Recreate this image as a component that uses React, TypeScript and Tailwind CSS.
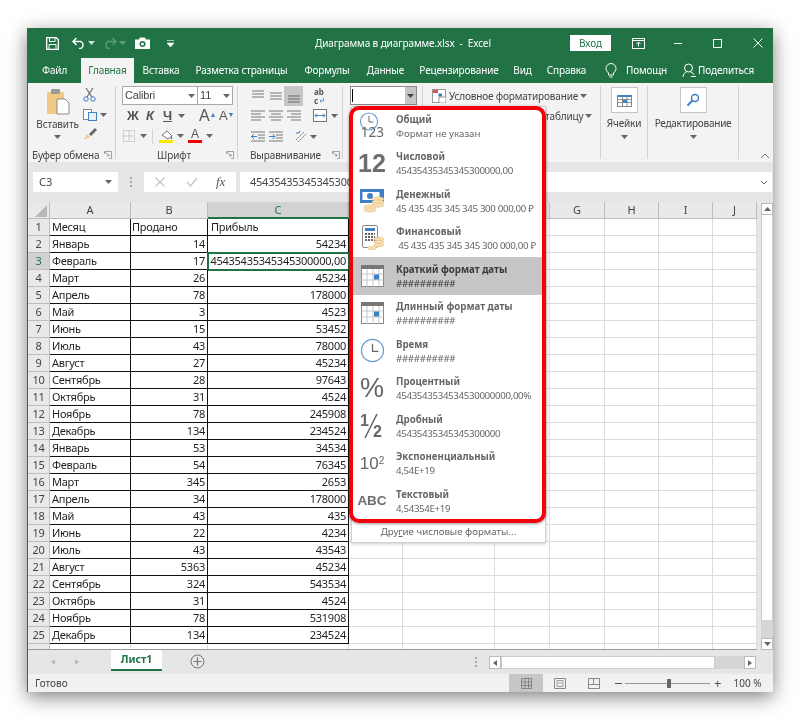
import { ReactNode } from "react";

const rows: [string, string, string][] = [
  ["Месяц", "Продано", "Прибыль"],
  ["Январь", "14", "54234"],
  ["Февраль", "17", "45435435345345300000,00"],
  ["Март", "26", "45234"],
  ["Апрель", "78", "178000"],
  ["Май", "3", "4523"],
  ["Июнь", "15", "53452"],
  ["Июль", "43", "78000"],
  ["Август", "27", "45234"],
  ["Сентябрь", "28", "97643"],
  ["Октябрь", "31", "4524"],
  ["Ноябрь", "78", "245908"],
  ["Декабрь", "134", "234524"],
  ["Январь", "53", "34534"],
  ["Февраль", "54", "76345"],
  ["Март", "345", "2653"],
  ["Апрель", "34", "178000"],
  ["Май", "43", "435"],
  ["Июнь", "22", "4234"],
  ["Июль", "43", "43543"],
  ["Август", "5363", "45234"],
  ["Сентябрь", "324", "543534"],
  ["Октябрь", "31", "4524"],
  ["Ноябрь", "78", "531908"],
  ["Декабрь", "134", "234524"],
];

const tabs = [
  { label: "Файл", w: "w-[53px]" },
  { label: "Главная", w: "w-[53px]", active: true },
  { label: "Вставка", w: "w-[54px]" },
  { label: "Разметка страницы", w: "w-[107px]" },
  { label: "Формулы", w: "w-[64px]" },
  { label: "Данные", w: "w-[53px]" },
  { label: "Рецензирование", w: "w-[94px]" },
  { label: "Вид", w: "w-[33px]" },
  { label: "Справка", w: "w-[55px]" },
];

const gridCols = ["w-[54px]", "w-[92px]", "w-[55px]", "w-[55px]", "w-[54px]", "w-[54px]", "w-[44px]"];
const headCols = [
  { l: "", w: "w-[54px]" },
  { l: "", w: "w-[92px]" },
  { l: "", w: "w-[55px]" },
  { l: "G", w: "w-[55px]" },
  { l: "H", w: "w-[54px]" },
  { l: "I", w: "w-[54px]" },
  { l: "J", w: "w-[44px]" },
];

const Caret = ({ c = "#666" }: { c?: string }) => (
  <svg width="7" height="4" viewBox="0 0 7 4" className="shrink-0"><path d="M0 0h7L3.5 4z" fill={c} /></svg>
);

const Launcher = () => (
  <svg width="8" height="8" viewBox="0 0 8 8" className="shrink-0"><path d="M.5 3V.5H7.5V7.5H5M1 1l4 4M5 3v2H3" fill="none" stroke="#8a8a8a" strokeWidth=".8" /></svg>
);

const Lines = ({ kind }: { kind: "l" | "c" | "r" }) => {
  const x = kind === "l" ? [0, 0, 0, 0] : kind === "c" ? [0, 2, 0, 2] : [0, 4, 0, 4];
  return (
    <svg width="14" height="11" viewBox="0 0 14 11">
      {[1, 4, 7, 10].map((y, i) => (
        <path key={y} d={`M${x[i]} ${y}H${i % 2 ? (kind === "l" ? 10 : kind === "c" ? 12 : 14) : 14}`} stroke="#777" strokeWidth="1" />
      ))}
    </svg>
  );
};

const ClockFace = ({ size = 26 }: { size?: number }) => (
  <svg width={size} height={size} viewBox="0 0 26 26"><circle cx="13" cy="13" r="11.5" fill="#fff" stroke="#6d9bcf" strokeWidth="1.2" /><path d="M13 6v8h6" fill="none" stroke="#666" strokeWidth="1.3" /></svg>
);

const Calendar = () => (
  <svg width="23" height="22" viewBox="0 0 23 22">
    <rect x=".5" y=".5" width="22" height="21" fill="#fff" stroke="#8a8a8a" />
    <rect x="0" y="0" width="23" height="4" fill="#777" />
    <path d="M.5 9h22M.5 15h22M6 4v18M12 4v18M18 4v18" stroke="#bbb" strokeWidth=".8" />
    <rect x="13" y="9.5" width="5" height="5" fill="#3f7fc4" />
  </svg>
);

const Coins = () => (
  <>
    {[0, 3, 6].map((d) => <ellipse key={d} cx="18" cy={10 + d} rx="6" ry="2.2" fill="#f7ddb0" stroke="#dfb877" strokeWidth=".5" />)}
    {[0, 3].map((d) => <ellipse key={d} cx="10" cy={18 + d} rx="6" ry="2.2" fill="#f7ddb0" stroke="#dfb877" strokeWidth=".5" />)}
  </>
);

const formats: { title: string; sub: string; icon: ReactNode; active?: boolean; plain?: boolean }[] = [
  {
    title: "Общий", sub: "Формат не указан", plain: true,
    icon: (
      <svg width="26" height="28" viewBox="0 0 26 28">
        <circle cx="10" cy="9.5" r="8.5" fill="#fff" stroke="#6d9bcf" strokeWidth="1.1" />
        <path d="M10 4v6h4.5" fill="none" stroke="#666" strokeWidth="1" />
        <text x="25" y="25" textAnchor="end" fontSize="13.5" fill="#666" fontFamily="Noto Sans, sans-serif">123</text>
      </svg>
    ),
  },
  { title: "Числовой", sub: "45435435345345300000,00", icon: <span className="text-[25px] font-bold leading-none text-[#6e6e6e] font-['Liberation_Sans',sans-serif]">12</span> },
  {
    title: "Денежный", sub: "45 435 435 345 345 300 000,00 ₽",
    icon: (
      <svg width="25" height="24" viewBox="0 0 25 24">
        <rect x="0" y="0" width="24" height="14" fill="#3f7fc4" />
        <rect x="2.5" y="3" width="17" height="8" fill="#fff" />
        <circle cx="10" cy="7" r="3" fill="#3f7fc4" />
        <Coins />
      </svg>
    ),
  },
  {
    title: "Финансовый", sub: " 45 435 435 345 345 300 000,00 ₽",
    icon: (
      <svg width="26" height="26" viewBox="0 0 26 26">
        <rect x="3.5" y=".5" width="15" height="22" rx="1.5" fill="#fff" stroke="#8a8a8a" />
        <rect x="6" y="3" width="10" height="3" fill="#3f7fc4" />
        <path d="M6 9h10M6 12h10M6 15h10" stroke="#666" strokeWidth="2" strokeDasharray="2 1" />
        {[0, 3, 6].map((d) => <ellipse key={d} cx="20" cy={14 + d} rx="5" ry="1.8" fill="#f7ddb0" stroke="#dfb877" strokeWidth=".5" />)}
        <ellipse cx="13" cy="23" rx="4.5" ry="1.8" fill="#f7ddb0" stroke="#dfb877" strokeWidth=".5" />
      </svg>
    ),
  },
  { title: "Краткий формат даты", sub: "##########", active: true, icon: <Calendar /> },
  { title: "Длинный формат даты", sub: "##########", icon: <Calendar /> },
  { title: "Время", sub: "##########", icon: <ClockFace size={25} /> },
  { title: "Процентный", sub: "4543543534534530000000,00%", icon: <span className="text-[27px] leading-none text-[#666] font-['Liberation_Sans',sans-serif]">%</span> },
  {
    title: "Дробный", sub: "45435435345345300000",
    icon: (
      <svg width="26" height="28" viewBox="0 0 26 28">
        <text x="1" y="14" fontSize="16" fontWeight="bold" fill="#666" fontFamily="Liberation Sans, sans-serif">1</text>
        <path d="M6 26 18 2" stroke="#666" strokeWidth="1.5" />
        <text x="14" y="25" fontSize="16" fontWeight="bold" fill="#666" fontFamily="Liberation Sans, sans-serif">2</text>
      </svg>
    ),
  },
  {
    title: "Экспоненциальный", sub: "4,54E+19",
    icon: <span className="text-[17px] leading-none text-[#666] font-['Liberation_Sans',sans-serif]">10<sup className="text-[10px]">2</sup></span>,
  },
  { title: "Текстовый", sub: "4,54354E+19", icon: <span className="text-[13.5px] font-bold leading-none text-[#6e6e6e] font-['Liberation_Sans',sans-serif]">ABC</span> },
];

function SheetRow({ n, a, b, c }: { n: number; a: string; b: string; c: string }) {
  const sel = n === 3;
  return (
    <div className="flex h-[17px] text-[11px] tracking-[-0.25px] leading-[16px] text-[#1f1f1f] font-['Noto_Sans',sans-serif]">
      <div className={`w-[22px] shrink-0 text-center border-r border-b border-[#bdbdbd] text-[#444] ${sel ? "bg-[#d2d2d2] text-[#217346]" : "bg-[#e9e9e9]"}`}>{n}</div>
      <div className="w-[81px] shrink-0 pl-[2px] border-r border-b border-[#111] whitespace-nowrap overflow-hidden">{a}</div>
      <div className={`w-[77px] shrink-0 pr-[2px] border-r border-b border-[#111] whitespace-nowrap overflow-hidden ${n === 1 ? "text-left pl-[1px]" : "text-right"}`}>{b}</div>
      <div className={`w-[141px] shrink-0 px-[2px] border-r border-b border-[#111] whitespace-nowrap ${n === 1 ? "text-left pl-[3px]" : "text-right"} ${sel ? "outline-2 -outline-offset-1 outline-[#217346]" : ""}`}>{c}</div>
      {gridCols.map((w, i) => <div key={i} className={`${w} shrink-0 border-r border-b border-[#dcdcdc]`} />)}
    </div>
  );
}

function Ribbon() {
  return (
    <div className="flex h-[79px] shrink-0 bg-[#f3f3f3] text-[10px] tracking-[-0.15px] text-[#444]">
      {/* clipboard */}
      <div className="w-[88px] shrink-0 my-[3px] border-r border-[#d2d2d2] flex flex-col">
        <div className="flex h-[56px]">
          <div className="w-[50px] flex flex-col items-center pl-[9px] pt-[3px]">
            <svg width="24" height="26" viewBox="0 0 24 26"><rect x="1" y="3" width="17" height="22" rx="1" fill="#f0c987" /><rect x="5" y="0" width="9" height="5" rx="1" fill="#9a9a9a" /><path d="M11 10h8l4 4v11H11z" fill="#fff" stroke="#8a8a8a" /></svg>
            <span className="mt-[3px] leading-[13px] whitespace-nowrap">Вставить</span>
            <div className="mt-[4px]"><Caret /></div>
          </div>
          <div className="flex flex-col pl-[5px] gap-[7px] pt-[2px]">
            <svg width="13" height="14" viewBox="0 0 13 14"><circle cx="3" cy="11" r="2.2" fill="none" stroke="#3f7fc4" /><circle cx="10" cy="11" r="2.2" fill="none" stroke="#3f7fc4" /><path d="M4 9 10 0M9 9 3 0" stroke="#666" strokeWidth="1.1" /></svg>
            <div className="flex items-center gap-[3px]">
              <svg width="14" height="12" viewBox="0 0 14 12"><rect x=".5" y=".5" width="8" height="10" fill="#fff" stroke="#888" /><rect x="5.5" y="3.5" width="8" height="8" fill="#e8f0f8" stroke="#3f7fc4" /></svg>
              <Caret />
            </div>
            <svg width="14" height="13" viewBox="0 0 14 13"><path d="m1 12 3-6 3 3z" fill="#f0c987" /><path d="m6 6 6-6 2 2-6 6z" fill="#666" /></svg>
          </div>
        </div>
        <div className="flex items-center justify-between pl-[4px] pr-[3px] mt-auto mb-[-2px] leading-[12px]">
          <span className="whitespace-nowrap">Буфер обмена</span>
          <Launcher />
        </div>
      </div>

      {/* font */}
      <div className="w-[122px] shrink-0 my-[3px] border-r border-[#d2d2d2] flex flex-col pl-[6px]">
        <div className="flex h-[19px] w-[111px] bg-white border border-[#a8a8a8]">
          <div className="w-[75px] flex items-center justify-between px-[2px] border-r border-[#a8a8a8] text-[11px] font-['Liberation_Sans',sans-serif]"><span>Calibri</span><Caret /></div>
          <div className="flex-1 flex items-center justify-between px-[2px] text-[11px] font-['Liberation_Sans',sans-serif]"><span>11</span><Caret /></div>
        </div>
        <div className="flex items-center h-[19px] pl-[5px] mt-[1px] text-[13px] text-[#555] font-['Liberation_Sans',sans-serif]">
          <b className="w-[19px]">Ж</b>
          <i className="w-[17px] font-bold">К</i>
          <b className="w-[15px] underline">Ч</b>
          <Caret />
          <span className="ml-[14px] w-[20px] text-[16px] leading-none">A<sup className="text-[#3f7fc4] text-[7px]">▲</sup></span>
          <span className="text-[13px] leading-none">A<sup className="text-[#3f7fc4] text-[7px]">▼</sup></span>
        </div>
        <div className="flex items-center h-[18px] pl-[1px] mt-[2px]">
          <svg width="12" height="12" viewBox="0 0 12 12"><rect x=".5" y=".5" width="11" height="11" fill="none" stroke="#aaa" strokeDasharray="1 1" /><path d="M6 1v10M1 6h10" stroke="#aaa" strokeDasharray="1 1" /></svg>
          <div className="ml-[5px]"><Caret /></div>
          <div className="w-px h-[15px] bg-[#d2d2d2] ml-[5px]" />
          <div className="ml-[6px] flex flex-col items-center w-[14px]">
            <svg width="13" height="10" viewBox="0 0 13 10"><path d="m2 5 5-4 5 5-4 3z" fill="#fff" stroke="#777" /><path d="M11 6s2 2 1 3-2-1-1-3" fill="#3f7fc4" /></svg>
            <div className="w-[14px] h-[3px] bg-[#ffe600]" />
          </div>
          <div className="ml-[4px]"><Caret /></div>
          <div className="ml-[4px] flex flex-col items-center w-[14px] leading-none">
            <span className="text-[12px] text-[#555] h-[11px] leading-[11px] font-['Liberation_Sans',sans-serif]">A</span>
            <div className="w-[14px] h-[3px] bg-[#f00000]" />
          </div>
          <div className="ml-[4px]"><Caret /></div>
        </div>
        <div className="flex items-center mt-auto mb-[-2px] leading-[12px] pr-[3px]">
          <span className="flex-1 text-center">Шрифт</span>
          <Launcher />
        </div>
      </div>

      {/* alignment */}
      <div className="w-[105px] shrink-0 my-[3px] border-r border-[#d2d2d2] flex flex-col pl-[13px]">
        <div className="flex items-center h-[20px]">
          <svg width="14" height="12" viewBox="0 0 14 12"><path d="M1 1h12M1 4h12M1 7h12" stroke="#777" /></svg>
          <svg width="14" height="12" viewBox="0 0 14 12" className="ml-[4px]"><path d="M1 3h12M1 6h12M1 9h12" stroke="#777" /></svg>
          <div className="ml-[1px] w-[19px] h-[20px] bg-[#c6c6c6] flex items-end justify-center pb-[3px]"><svg width="14" height="9" viewBox="0 0 14 9"><path d="M1 2h12M1 5h12M1 8h12" stroke="#666" /></svg></div>
          <div className="ml-[11px] text-[8px] leading-[9px] text-[#555] font-bold">
            <div>ab</div>
            <div className="flex items-center gap-[1px]">c<svg width="5" height="5" viewBox="0 0 5 5"><path d="M4.500 0v3H1M2.500 1.500 1 3l1.500 1.500" fill="none" stroke="#3f7fc4" strokeWidth=".8" /></svg></div>
          </div>
        </div>
        <div className="flex items-center h-[19px]">
          <Lines kind="l" />
          <div className="ml-[4px]"><Lines kind="c" /></div>
          <div className="ml-[4px]"><Lines kind="r" /></div>
          <svg width="14" height="13" viewBox="0 0 14 13" className="ml-[12px]"><rect x=".5" y=".5" width="13" height="12" fill="#fff" stroke="#777" /><path d="M2 6.5h10M2 6.5l2-2M2 6.5l2 2M12 6.5l-2-2M12 6.5l-2 2" stroke="#3f7fc4" fill="none" /></svg>
          <div className="ml-[4px]"><Caret /></div>
        </div>
        <div className="flex items-center h-[19px] mt-[2px]">
          <svg width="14" height="11" viewBox="0 0 14 11"><path d="M0 1h14M7 4h7M7 7h7M0 10h14" stroke="#777" /><path d="M6 5.5H0M3 3 .5 5.5 3 8" stroke="#3f7fc4" fill="none" /></svg>
          <svg width="14" height="11" viewBox="0 0 14 11" className="ml-[4px]"><path d="M0 1h14M7 4h7M7 7h7M0 10h14" stroke="#777" /><path d="M0 5.5h6M3.500 3 6 5.500 3.500 8" stroke="#3f7fc4" fill="none" /></svg>
          <svg width="13" height="13" viewBox="0 0 13 13" className="ml-[12px]"><path d="m1 10 8-8M3 12l8-8" stroke="#777" strokeDasharray="2 1" /><path d="M1 3h3l1-2" stroke="#3f7fc4" fill="none" /></svg>
          <div className="ml-[2px]"><Caret /></div>
        </div>
        <div className="flex items-center justify-between pr-[2px] mt-auto mb-[-2px] leading-[12px] ml-[-1px]">
          <span>Выравнивание</span>
          <Launcher />
        </div>
      </div>

      {/* number */}
      <div className="w-[80px] shrink-0 my-[3px] border-r border-[#d2d2d2] pl-[7px]">
        <div className="flex w-[67px] h-[19px] bg-white border border-[#8a8a8a]">
          <div className="flex-1 pl-[1px] py-[2px]"><div className="w-px h-full bg-black" /></div>
          <div className="w-[11px] bg-[#c6c6c6] flex items-center justify-center"><Caret c="#444" /></div>
        </div>
      </div>

      {/* styles */}
      <div className="w-[178px] shrink-0 my-[3px] border-r border-[#d2d2d2] pl-[9px] flex flex-col">
        <div className="flex items-center h-[20px]">
          <svg width="14" height="14" viewBox="0 0 14 14"><rect x=".5" y=".5" width="13" height="13" fill="#fff" stroke="#999" /><rect x="1" y="1" width="5" height="3" fill="#d9534f" /><rect x="6.500" y="4.500" width="3.500" height="3" fill="#3f7fc4" /><rect x="7" y="8" width="7" height="6" fill="#fff" stroke="#777" strokeWidth=".7" /></svg>
          <span className="ml-[3px] whitespace-nowrap">Условное форматирование</span>
          <div className="ml-[2px]"><Caret /></div>
        </div>
        <div className="flex items-center h-[20px] pl-[113px]">
          <span>таблицу</span>
          <div className="ml-[2px]"><Caret /></div>
        </div>
      </div>

      {/* cells */}
      <div className="w-[47px] shrink-0 my-[3px] border-r border-[#d2d2d2] flex flex-col items-center">
        <div className="mt-[1px] w-[27px] h-[26px] bg-white border border-[#c6c6c6] flex items-center justify-center">
          <svg width="15" height="14" viewBox="0 0 15 14"><rect x=".5" y="2.500" width="14" height="11" fill="#fff" stroke="#888" /><path d="M1 3h13" stroke="#3f7fc4" strokeWidth="2" /><path d="M1 6.500h13M1 9.500h13M5.500 3v10M10 3v10" stroke="#777" strokeWidth=".8" /><rect x="6" y="7" width="4" height="3" fill="#3f7fc4" /></svg>
        </div>
        <span className="mt-[4px] leading-[13px]">Ячейки</span>
        <div className="mt-[5px]"><Caret /></div>
      </div>

      {/* editing */}
      <div className="w-[91px] shrink-0 my-[3px] border-r border-[#d2d2d2] flex flex-col items-center">
        <div className="mt-[1px] w-[27px] h-[26px] bg-white border border-[#c6c6c6] flex items-center justify-center">
          <svg width="14" height="14" viewBox="0 0 14 14"><circle cx="9" cy="5" r="3.500" fill="#fff" stroke="#3f7fc4" strokeWidth="1.500" /><path d="m6.500 7.500-5 5" stroke="#3f7fc4" strokeWidth="2" /></svg>
        </div>
        <span className="mt-[4px] leading-[13px] whitespace-nowrap tracking-[-0.25px]">Редактирование</span>
        <div className="mt-[5px]"><Caret /></div>
      </div>

      <div className="flex-1 flex items-end justify-end pr-[3px] pb-[3px]">
        <svg width="10" height="6" viewBox="0 0 10 6"><path d="M1 5l4-4 4 4" fill="none" stroke="#777" /></svg>
      </div>
    </div>
  );
}

export default function App() {
  return (
    <div className="w-[800px] h-[719px] bg-white pt-[28px] pl-[27px] overflow-hidden font-['Noto_Sans','Open_Sans',sans-serif]">
      <div className="relative w-[746px] h-[664px] flex flex-col bg-white border-l border-[#217346] shadow-[0_5px_18px_rgba(0,0,0,0.5)] blur-[0.4px]">
        {/* title bar */}
        <div className="h-[30px] shrink-0 bg-[#217346] flex items-center text-white text-[10px]">
          <svg width="13" height="13" viewBox="0 0 13 13" className="ml-[18px]"><path d="M.7.7h9.500l2.100 2.100v9.500H.7z" fill="none" stroke="#fff" strokeWidth="1.300" /><path d="M3.500 1v3.500h5.500V1M3 12V7.500h7V12" fill="none" stroke="#fff" /></svg>
          <svg width="14" height="12" viewBox="0 0 14 12" className="ml-[13px]"><path d="M4.500 1 1 4.500 4.500 8M1 4.500h8a4 4 0 0 1 0 7H7" fill="none" stroke="#fff" strokeWidth="1.400" /></svg>
          <div className="ml-[2px]"><Caret c="#cfe3d8" /></div>
          <svg width="14" height="12" viewBox="0 0 14 12" className="ml-[8px]"><path d="M9.500 1 13 4.500 9.500 8M13 4.500H5a4 4 0 0 0 0 7h2" fill="none" stroke="#5f9c7b" strokeWidth="1.400" /></svg>
          <div className="ml-[2px]"><Caret c="#5f9c7b" /></div>
          <svg width="15" height="12" viewBox="0 0 15 12" className="ml-[9px]"><path d="M0 2.500h4L5 .5h5l1 2h4V12H0z" fill="#fff" /><circle cx="7.500" cy="7" r="3" fill="#217346" /><circle cx="7.500" cy="7" r="1.500" fill="#fff" /></svg>
          <svg width="7" height="7" viewBox="0 0 7 7" className="ml-[17px]"><path d="M0 .5h7M0 3h7l-3.500 4z" stroke="#fff" strokeWidth=".6" fill="#fff" /></svg>
          <span className="ml-[141px] w-[180px] whitespace-pre tracking-[-0.1px]">Диаграмма в диаграмме.xlsx  -  Excel</span>
          <div className="ml-[75px] w-[41px] h-[16px] bg-white text-[#217346] flex items-center justify-center">Вход</div>
          <svg width="13" height="11" viewBox="0 0 13 11" className="ml-[21px]"><rect x=".5" y=".5" width="12" height="10" fill="none" stroke="#fff" /><path d="M1 2.500h11M6.500 8.500v-4M4.500 6l2-2 2 2" fill="none" stroke="#fff" /></svg>
          <div className="ml-[29px] w-[8px] h-px bg-white" />
          <div className="ml-[31px] w-[9px] h-[9px] border border-white" />
          <svg width="10" height="10" viewBox="0 0 10 10" className="ml-[31px]"><path d="m.5.5 9 9m0-9-9 9" stroke="#fff" /></svg>
        </div>

        {/* tabs */}
        <div className="h-[25px] shrink-0 bg-[#217346] flex text-white text-[10px] tracking-[-0.15px]">
          {tabs.map((t) => (
            <div key={t.label} className={`${t.w} shrink-0 flex items-center justify-center whitespace-nowrap ${t.active ? "bg-[#f3f3f3] text-[#217346]" : ""}`}>{t.label}</div>
          ))}
          <svg width="12" height="15" viewBox="0 0 12 15" className="ml-[11px] mt-[5px]"><path d="M3.500 10C2 8.500 1 7.500 1 5.500a5 5 0 0 1 10 0c0 2-1 3-2.500 4.500V12h-5zM4.500 14h3" fill="none" stroke="#fff" /></svg>
          <span className="ml-[9px] flex items-center">Помощн</span>
          <svg width="14" height="15" viewBox="0 0 14 15" className="ml-[15px] mt-[5px]"><circle cx="6.500" cy="5" r="4" fill="none" stroke="#fff" /><path d="M1 14c0-3 2-4.500 3.500-5M8.500 9c2 .5 3.500 2 3.500 3M9 13.500h5" fill="none" stroke="#fff" /></svg>
          <span className="ml-[2px] flex items-center">Поделиться</span>
        </div>

        <Ribbon />

        {/* formula bar */}
        <div className="h-[40px] shrink-0 bg-[#e6e6e6] flex items-start pt-[10px] text-[11px] text-[#444]">
          <div className="ml-[5px] w-[85px] h-[20px] bg-white flex items-center justify-between px-[6px]"><span>C3</span><Caret /></div>
          <div className="ml-[12px] mt-[5px] flex flex-col gap-[2px]">
            <div className="w-[2px] h-[2px] bg-[#aaa]" /><div className="w-[2px] h-[2px] bg-[#aaa]" /><div className="w-[2px] h-[2px] bg-[#aaa]" />
          </div>
          <div className="ml-[12px] w-[92px] h-[20px] bg-white flex items-center pl-[11px]">
            <svg width="10" height="10" viewBox="0 0 10 10"><path d="m.5.5 9 9m0-9-9 9" stroke="#c4c4c4" strokeWidth="1.300" /></svg>
            <svg width="12" height="10" viewBox="0 0 12 10" className="ml-[21px]"><path d="m1 5 3.500 4L11 1" fill="none" stroke="#c4c4c4" strokeWidth="1.300" /></svg>
            <span className="ml-[18px] italic text-[13px] text-[#555] font-['Liberation_Serif',serif]">fx</span>
          </div>
          <div className="ml-[4px] w-[532px] h-[20px] bg-white flex items-center pl-[10px] justify-between pr-[4px]">
            <span className="text-[11px] tracking-[-0.25px]">45435435345345300000</span>
            <svg width="8" height="5" viewBox="0 0 8 5"><path d="m1 1 3 3 3-3" fill="none" stroke="#666" /></svg>
          </div>
        </div>

        {/* sheet */}
        <div className="h-[448px] shrink-0 flex bg-[#e6e6e6]">
          <div className="w-[729px] shrink-0 overflow-hidden bg-white">
            <div className="flex h-[17px] text-[11px] leading-[16px] text-[#444] bg-[#e9e9e9] font-['Noto_Sans',sans-serif]">
              <div className="w-[22px] shrink-0 border-r border-b border-[#bdbdbd] relative overflow-hidden">
                <svg width="12" height="12" viewBox="0 0 12 12" className="absolute right-[2px] bottom-[1px]"><path d="M12 0v12H0z" fill="#b8b8b8" /></svg>
              </div>
              <div className="w-[81px] shrink-0 text-center border-r border-b border-[#bdbdbd]">A</div>
              <div className="w-[77px] shrink-0 text-center border-r border-b border-[#bdbdbd]">B</div>
              <div className="w-[141px] shrink-0 text-center border-r border-[#bdbdbd] border-b-2 border-b-[#217346] bg-[#d2d2d2] text-[#217346]">C</div>
              {headCols.map((c, i) => <div key={i} className={`${c.w} shrink-0 text-center border-r border-b border-[#bdbdbd]`}>{c.l}</div>)}
            </div>
            {rows.map((r, i) => <SheetRow key={i} n={i + 1} a={r[0]} b={r[1]} c={r[2]} />)}
            <div className="flex h-[6px] border-b border-[#999]">
              <div className="w-[22px] shrink-0 bg-[#e9e9e9] border-r border-[#bdbdbd]" />
              <div className="w-[81px] shrink-0 border-r border-[#dcdcdc]" />
              <div className="w-[77px] shrink-0 border-r border-[#dcdcdc]" />
              <div className="w-[141px] shrink-0 border-r border-[#dcdcdc]" />
              {gridCols.map((w, i) => <div key={i} className={`${w} shrink-0 border-r border-[#dcdcdc]`} />)}
            </div>
          </div>
          <div className="ml-[4px] w-[12px] flex flex-col mt-[1px]">
            <div className="h-[12px] bg-white border border-[#bbb] flex items-center justify-center"><svg width="7" height="4" viewBox="0 0 7 4"><path d="M0 4h7L3.500 0z" fill="#666" /></svg></div>
            <div className="h-[405px] bg-white border-x border-[#ccc]" />
            <div className="h-[18px] bg-[#d6d6d6]" />
            <div className="h-[12px] bg-white border border-[#bbb] flex items-center justify-center"><Caret /></div>
          </div>
        </div>

        {/* sheet tabs */}
        <div className="h-[24px] shrink-0 bg-[#e6e6e6] flex items-start text-[#444]">
          <svg width="4" height="6" viewBox="0 0 4 6" className="ml-[23px] mt-[9px]"><path d="M4 0v6L0 3z" fill="#bbb" /></svg>
          <svg width="4" height="6" viewBox="0 0 4 6" className="ml-[20px] mt-[9px]"><path d="M0 0v6l4-3z" fill="#bbb" /></svg>
          <div className="ml-[32px] w-[51px] h-[21px] bg-white border-b-2 border-[#217346] text-[#217346] font-bold text-[10.5px] flex items-center justify-center">Лист1</div>
          <svg width="15" height="15" viewBox="0 0 15 15" className="ml-[28px] mt-[4px]"><circle cx="7.500" cy="7.500" r="6.500" fill="none" stroke="#777" /><path d="M7.500 3.500v8M3.500 7.500h8" stroke="#777" strokeWidth="1.200" /></svg>
          <div className="ml-[270px] mt-[7px] flex flex-col gap-[2px]">
            <div className="w-[2px] h-[2px] bg-[#aaa]" /><div className="w-[2px] h-[2px] bg-[#aaa]" /><div className="w-[2px] h-[2px] bg-[#aaa]" />
          </div>
          <div className="ml-[12px] mt-[6px] w-[267px] h-[13px] flex">
            <div className="w-[12px] bg-white border border-[#bbb] flex items-center justify-center"><svg width="4" height="6" viewBox="0 0 4 6"><path d="M4 0v6L0 3z" fill="#666" /></svg></div>
            <div className="w-[214px] bg-white border border-[#ccc]" />
            <div className="w-[29px] bg-[#d6d6d6]" />
            <div className="w-[12px] bg-white border border-[#bbb] flex items-center justify-center"><svg width="4" height="6" viewBox="0 0 4 6"><path d="M0 0v6l4-3z" fill="#666" /></svg></div>
          </div>
        </div>

        {/* status bar */}
        <div className="h-[18px] shrink-0 bg-[#f1f1f1] flex items-center text-[10px] text-[#444]">
          <span className="ml-[7px] w-[34px]">Готово</span>
          <div className="ml-[440px] w-[34px] h-full bg-[#c6c6c6] flex items-center justify-center"><svg width="11" height="11" viewBox="0 0 11 11"><path d="M.5.5h10v10H.5zM.5 4h10M.5 7.500h10M4 .5v10M7.500 .5v10" fill="none" stroke="#777" strokeWidth=".8" /></svg></div>
          <svg width="12" height="11" viewBox="0 0 12 11" className="ml-[11px]"><path d="M.5.5h11v10H.5z" fill="none" stroke="#888" /><path d="M3 2.500h6v6H3zM4 5h4" fill="none" stroke="#888" strokeWidth=".8" /></svg>
          <svg width="12" height="11" viewBox="0 0 12 11" className="ml-[22px]"><path d="M.5.5h11v10H.5zM.5 6.500h5V.5M5.500 6.500h6" fill="none" stroke="#888" /></svg>
          <div className="ml-[15px] w-[7px] h-px bg-[#555]" />
          <div className="ml-[3px] w-[85px] h-px bg-[#999] relative">
            <div className="absolute left-[42px] top-[-4px] w-[4px] h-[9px] bg-[#666]" />
          </div>
          <span className="ml-[4px] text-[13px] leading-none text-[#555]">+</span>
          <span className="ml-[12px] whitespace-nowrap">100 %</span>
        </div>

        {/* number format dropdown */}
        <div className="absolute left-[323px] top-[78px] w-[195px] h-[437px] bg-white border border-[#d0d0d0] shadow-[0_1px_3px_rgba(0,0,0,.2)] text-[9.7px] text-[#666]">
          {formats.map((f) => (
            <div key={f.title} className={`h-[37.5px] flex items-center pl-[7px] ${f.active ? "bg-[#c6c6c6] text-[#3a3a3a]" : ""}`}>
              <div className="w-[26px] h-[30px] flex items-center justify-center shrink-0">{f.icon}</div>
              <div className="ml-[11px] mt-[2px] flex flex-col whitespace-pre">
                <span className="font-bold leading-[14px]">{f.title}</span>
                <span className={`leading-[14px] ${f.plain ? "" : "tracking-[-0.33px]"}`}>{f.sub}</span>
              </div>
            </div>
          ))}
          <div className="mt-[5px] text-center">Дру<u>г</u>ие числовые форматы...</div>
        </div>

        {/* red annotation frame */}
        <div className="absolute left-[321px] top-[78px] w-[197px] h-[417px] border-[4px] border-[#f4000c] rounded-[10px] shadow-[0_1px_3px_rgba(0,0,0,.4)]" />
      </div>
    </div>
  );
}
